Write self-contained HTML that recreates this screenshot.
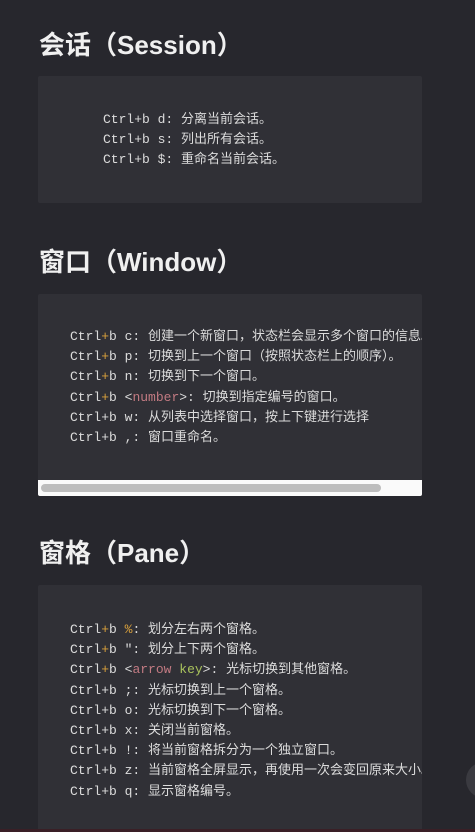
<!DOCTYPE html>
<html><head><meta charset="utf-8"><style>
*{margin:0;padding:0;box-sizing:border-box}
html,body{width:475px;height:832px;overflow:hidden}
body{background:#27272d;position:relative;font-family:"Liberation Sans","Noto Sans CJK SC",sans-serif}
h2{position:absolute;left:39px;color:#f0f0f0;font-size:26px;font-weight:bold;white-space:nowrap;line-height:32px}
.blk{position:absolute;left:38px;width:384px;background:#303036;overflow:hidden;border-radius:2px}
.code{position:absolute;font-family:"Liberation Mono","Noto Sans CJK SC",monospace;font-size:13px;color:#dcdcdc;white-space:pre;line-height:20.2px}
.o{color:#d9a03c}.p{color:#c27a82}.g{color:#a9c25c}
</style></head><body>
<h2 style="top:29px">会话（Session）</h2>
<div class="blk" style="top:76px;height:127px">
<div class="code" style="left:65px;top:34px">Ctrl+b d: 分离当前会话。
Ctrl+b s: 列出所有会话。
Ctrl+b $: 重命名当前会话。</div></div>
<h2 style="top:246px">窗口（Window）</h2>
<div class="blk" style="top:294px;height:202px">
<div class="code" style="left:32px;top:33px">Ctrl<span class="o">+</span>b c: 创建一个新窗口，状态栏会显示多个窗口的信息。
Ctrl<span class="o">+</span>b p: 切换到上一个窗口（按照状态栏上的顺序）。
Ctrl<span class="o">+</span>b n: 切换到下一个窗口。
Ctrl<span class="o">+</span>b &lt;<span class="p">number</span>&gt;: 切换到指定编号的窗口。
Ctrl+b w: 从列表中选择窗口，按上下键进行选择
Ctrl+b ,: 窗口重命名。</div>
<div style="position:absolute;left:0;top:186px;width:384px;height:16px;background:#fafafa"></div>
<div style="position:absolute;left:3px;top:190px;width:340px;height:8px;border-radius:4px;background:#bdbdbd"></div>
</div>
<h2 style="top:537px">窗格（Pane）</h2>
<div class="blk" style="top:585px;height:260px">
<div class="code" style="left:32px;top:35px">Ctrl<span class="o">+</span>b <span class="o">%</span>: 划分左右两个窗格。
Ctrl<span class="o">+</span>b ": 划分上下两个窗格。
Ctrl<span class="o">+</span>b &lt;<span class="p">arrow</span> <span class="g">key</span>&gt;: 光标切换到其他窗格。
Ctrl+b ;: 光标切换到上一个窗格。
Ctrl+b o: 光标切换到下一个窗格。
Ctrl+b x: 关闭当前窗格。
Ctrl+b !: 将当前窗格拆分为一个独立窗口。
Ctrl+b z: 当前窗格全屏显示，再使用一次会变回原来大小。
Ctrl+b q: 显示窗格编号。</div></div>
<div style="position:absolute;left:466px;top:762px;width:36px;height:36px;border-radius:50%;background:#3a3a40"></div>
<div style="position:absolute;left:0;top:829px;width:475px;height:3px;background:#3a1f26"></div>
</body></html>
